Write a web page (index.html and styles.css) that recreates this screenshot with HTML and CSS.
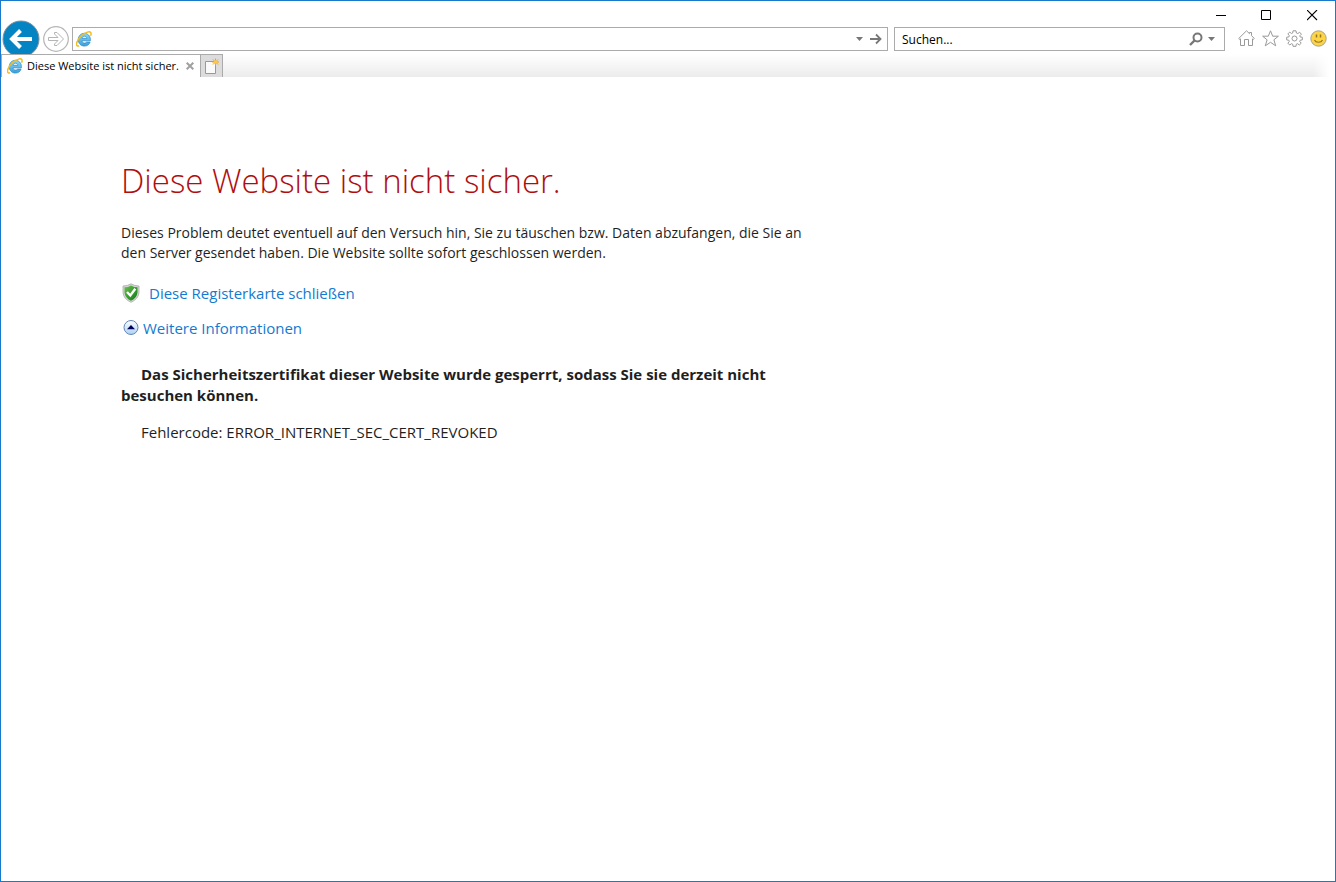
FILE: index.html
```html
<!DOCTYPE html>
<html lang="de">
<head>
<meta charset="utf-8">
<title>Diese Website ist nicht sicher.</title>
<link rel="stylesheet" href="styles.css">
</head>
<body>
<svg class="defs" aria-hidden="true">
  <defs>
    <linearGradient id="blue" x1="0" y1="0" x2="0" y2="1"><stop offset="0" stop-color="#8ad8f8"/><stop offset="1" stop-color="#3a9fdc"/></linearGradient>
    <linearGradient id="green" x1="0" y1="0" x2="1" y2="1"><stop offset="0" stop-color="#6cc04f"/><stop offset="1" stop-color="#0f7a14"/></linearGradient>
    <linearGradient id="disc" x1="0" y1="0" x2="0" y2="1"><stop offset="0" stop-color="#fdfeff"/><stop offset="1" stop-color="#a9d3f3"/></linearGradient>
    <symbol id="ie" viewBox="0 0 16 16">
      <path d="M8.300 2.300C11.700 2.300 14.400 4.900 14.400 8.500V9.800H6C6.200 11.200 7.200 12.100 8.500 12.100C9.500 12.100 10.200 11.700 10.600 11.100H14.100C13.300 13.500 11.200 15.100 8.400 15.100C4.900 15.100 2.200 12.400 2.200 8.800C2.200 5.100 4.900 2.300 8.300 2.300ZM6 7.300H10.900C10.700 6 9.700 5.200 8.500 5.200C7.200 5.200 6.200 6 6 7.300Z" fill="url(#blue)" stroke="#2a86c5" stroke-width=".7" fill-rule="evenodd"/>
      <path d="M3.200 14.700C.5 16-.2 13.300 1.300 10.300C3.300 6.300 7.700 2.400 11.500 1.100C14.500.1 15.900 1.800 14.600 4.800" fill="none" stroke="#f2bd20" stroke-width="1.500"/>
    </symbol>
  </defs>
</svg>
<div class="window">
  <header class="chrome">
    <div class="titlebar">
      <button class="caption" aria-label="Minimieren"><svg width="11" height="11"><path d="M1 5.500H11" stroke="#000"/></svg></button>
      <button class="caption" aria-label="Maximieren"><svg width="11" height="11"><path d="M.5.500H9.500V9.500H.5Z" fill="none" stroke="#000"/></svg></button>
      <button class="caption" aria-label="Schließen"><svg width="11" height="11"><path d="M0 0L10 10M10 0L0 10" stroke="#000" stroke-width="1.100"/></svg></button>
    </div>
    <div class="toolbar">
      <button class="back" aria-label="Zurück">
        <svg width="38" height="38"><circle cx="19" cy="19" r="18" fill="#0584c4" stroke="#7f8f96"/><path d="M18.500 10.500L10 19L18.500 27.500M10.500 19H30" fill="none" stroke="#fff" stroke-width="4"/></svg>
      </button>
      <button class="forward" aria-label="Vorwärts">
        <svg width="26" height="26" fill="none" stroke="#b5b5b5"><circle cx="13" cy="13" r="12.300" stroke-width="1.200"/><path d="M5.500 11.500H15L11.500 8V6.500H14L20.500 13L14 19.500H11.500V18L15 14.500H5.500Z"/></svg>
      </button>
      <div class="field address">
        <svg width="16" height="16"><use href="#ie"/></svg>
        <input class="input" type="text" aria-label="Adresse">
        <button class="fieldbtn" aria-label="Adressliste"><svg width="7" height="4"><path d="M0 0H7L3.500 4Z" fill="#777"/></svg></button>
        <button class="fieldbtn" aria-label="Wechseln zu"><svg width="12" height="12"><path d="M0 6H10M6 1.500L10.500 6L6 10.500" fill="none" stroke="#777" stroke-width="1.800"/></svg></button>
      </div>
      <div class="field search">
        <input class="input" type="text" placeholder="Suchen..." aria-label="Suchen">
        <button class="fieldbtn" aria-label="Suche starten"><svg width="14" height="14" fill="none" stroke="#777"><circle cx="8.500" cy="5.500" r="4" stroke-width="2"/><path d="M5.500 8.500L1 13" stroke-width="2.400"/></svg></button>
        <button class="fieldbtn" aria-label="Suchoptionen"><svg width="7" height="4"><path d="M0 0H7L3.500 4Z" fill="#777"/></svg></button>
      </div>
      <nav class="tools">
        <button aria-label="Startseite"><svg width="17" height="17" fill="none" stroke="#999"><path d="M.7 8.500L8.500.8L11.500 3.700V2.500H13.500V5.600L16.300 8.500L15.200 9.500L14.500 8.900V15.500H10.500V9.500H6.500V15.500H2.500V8.900L1.800 9.500Z"/></svg></button>
        <button aria-label="Favoriten"><svg width="17" height="17" fill="none" stroke="#999"><path d="M8.500.8L10.700 6.200H16.400L11.900 9.800L13.700 15.800L8.500 12.300L3.300 15.800L5.100 9.800L.6 6.200H6.300Z"/></svg></button>
        <button aria-label="Extras"><svg width="17" height="17" fill="none" stroke="#999"><path d="M7 .8H10L10.400 3L11.800 3.600L13.600 2.200L15.400 4.200L13.700 5.900L14.200 7L16.300 7.200V9.900L14.200 10.200L13.700 11.400L15.200 13.200L13.300 15L11.600 13.700L10.300 14.200L10 16.300H7L6.700 14.200L5.500 13.700L3.700 15L1.900 13.200L3.300 11.400L2.800 10.200L.7 9.900V7.200L2.800 7L3.300 5.700L1.900 3.900L3.700 2.100L5.500 3.500L6.700 3Z"/><circle cx="8.500" cy="8.500" r="2.500"/></svg></button>
        <button aria-label="Feedback senden"><svg width="17" height="17"><circle cx="8.500" cy="8.500" r="7.700" fill="#fcd444" stroke="#aaa18a"/><path d="M6.500 4.500V7.500M10.500 4.500V7.500" stroke="#92752b" stroke-width="1.500"/><path d="M4.500 10Q5.500 12.300 8.500 12.300T12.500 10" fill="none" stroke="#92752b" stroke-width="1.100"/></svg></button>
      </nav>
    </div>
    <div class="tabs">
      <div class="tab">
        <svg width="16" height="16"><use href="#ie"/></svg>
        <span class="tabtitle">Diese Website ist nicht sicher.</span>
        <button class="close" aria-label="Registerkarte schließen"><svg width="8" height="8"><path d="M.7.700L7.300 7.300M7.300.700L.7 7.300" stroke="#a0a0a0" stroke-width="2"/></svg></button>
      </div>
      <button class="newtab" aria-label="Neue Registerkarte">
        <svg width="16" height="16"><path d="M1.500 3.500H11.500V15.500H1.500Z" fill="#fafafa" stroke="#999"/><path d="M11.500 .5V7.500M8 4H15M9 1.500L14 6.500M14 1.500L9 6.500" stroke="#eda21c"/><circle cx="11.500" cy="4" r="1.800" fill="#ffc64a"/></svg>
      </button>
      <div class="tabfill"></div>
    </div>
  </header>
  <main class="page">
    <h1 class="heading">Diese Website ist nicht sicher.</h1>
    <p class="intro">Dieses Problem deutet eventuell auf den Versuch hin, Sie zu täuschen bzw. Daten abzufangen, die Sie an den Server gesendet haben. Die Website sollte sofort geschlossen werden.</p>
    <a class="action shieldlink" href="#">
      <svg width="18" height="20"><path d="M9 .8Q12.500 3 17 3V9.500Q16.500 16 9 19.300Q1.500 16 1 9.500V3Q5.500 3 9 .8Z" fill="#d2d6d2" stroke="#a8aca8" stroke-width=".8"/><path d="M9 2.400Q12 4.300 15.500 4.300V9.500Q15 15 9 17.700Q3 15 2.500 9.500V4.300Q6 4.300 9 2.400Z" fill="url(#green)"/><path d="M5 9L8.300 12.500L13.300 5.800" fill="none" stroke="#fff" stroke-width="2.400"/></svg>
      <span>Diese Registerkarte schließen</span>
    </a>
    <a class="action morelink" href="#">
      <svg width="16" height="16"><circle cx="8" cy="7.500" r="7" fill="url(#disc)" stroke="#6686b8"/><path d="M4 9.300L8 5L12 9.300Z" fill="#00005c"/></svg>
      <span>Weitere Informationen</span>
    </a>
    <p class="reason">Das Sicherheitszertifikat dieser Website wurde gesperrt, sodass Sie sie derzeit nicht besuchen können.</p>
    <p class="code">Fehlercode: ERROR_INTERNET_SEC_CERT_REVOKED</p>
  </main>
</div>
</body>
</html>
```
FILE: styles.css
```css
* { box-sizing: border-box; }
body { margin: 0; font-family: "Open Sans", "Noto Sans", sans-serif; color: #1f1f1f; background: #fff; }
button { padding: 0; border: 0; background: none; display: flex; align-items: center; justify-content: center; flex: none; }
svg { display: block; flex: none; }
.defs { position: absolute; width: 0; height: 0; }
.window { min-height: 100vh; border: 1px solid #1979ca; }
.titlebar { display: flex; justify-content: flex-end; height: 26px; }
.caption { width: 46px; height: 28px; }
.toolbar { display: flex; align-items: center; height: 24px; padding: 0 8px 0 1px; }
.back { margin-right: 3px; }
.forward { margin-right: 3px; }
.field { display: flex; align-items: center; height: 24px; min-width: 0; border: 1px solid #ababab; background: #fff; }
.address { flex: 1 1 0; padding: 0 5px 0 3px; gap: 7px; }
.search { flex: none; width: 331px; margin-left: 6px; padding: 0 9px 0 7px; gap: 5px; }
.input { flex: 1; min-width: 0; height: 20px; padding: 0; border: 0; outline: 0; background: none; font: 12px "Open Sans", "Noto Sans", sans-serif; color: #000; }
.input::placeholder { color: #000; opacity: 1; }
.tools { display: flex; gap: 7px; height: 24px; padding-top: 3px; margin-left: 13px; align-items: flex-start; }
.tabs { position: relative; display: flex; height: 23px; margin-top: 3px; }
.tab { display: flex; align-items: center; width: 200px; padding: 0 6px 0 5px; border: 1px solid #ababab; border-width: 1px 1px 0; background: #fff; }
.tabtitle { flex: 1; margin-left: 4px; font-size: 11px; line-height: 16px; white-space: nowrap; color: #000; }
.newtab { width: 22px; border: 1px solid #ababab; border-width: 1px 1px 0 0; background: #dcdcdc; }
.tabfill { flex: 1; margin-right: 6px; background: linear-gradient(to right, transparent calc(100% - 16px), #fff), linear-gradient(#fff, #ececec); }
.page { width: 830px; max-width: 100%; padding: 76px 16px 0 120px; }
.heading { margin: 0; font-size: 33px; font-weight: 300; line-height: 56px; color: #b00e0e; }
.intro { margin: 14px 0 0; font-size: 14px; line-height: 20px; }
.action { display: flex; align-items: center; width: max-content; max-width: 100%; font-size: 15px; line-height: 20px; color: #137ad1; text-decoration: none; }
.shieldlink { margin-top: 20px; padding-left: 1px; gap: 9px; }
.morelink { margin-top: 15px; padding-left: 2px; gap: 4px; }
.reason { margin: 26px 0 0; font-size: 15px; font-weight: 700; line-height: 21px; text-indent: 20px; }
.code { margin: 16px 0 0; font-size: 15px; line-height: 21px; text-indent: 20px; }
```
